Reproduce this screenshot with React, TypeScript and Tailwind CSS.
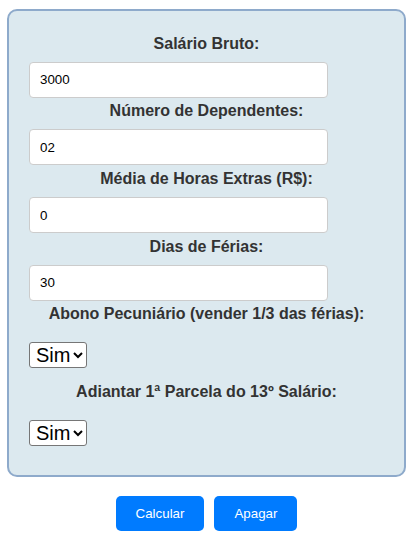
import { useState } from "react";

const labelCls =
  "block self-stretch text-center text-[16px] font-bold leading-[18px] text-[#333] mt-[4.7px] mb-[9px]";
const inputCls =
  "block h-[36px] w-[299px] rounded-[4px] border border-[#ccc] bg-white px-[10px] text-[13.33px] text-black outline-none";
const selectCls =
  "mt-[10px] mb-[10px] block h-[26px] w-[58px] rounded-[3px] border border-[#767676] bg-white pl-[2px] text-[20px] text-black";

function Field({ label, value }: { label: string; value: string }) {
  const [v, setV] = useState(value);
  return (
    <>
      <label className={labelCls}>{label}</label>
      <input className={inputCls} value={v} onChange={(e) => setV(e.target.value)} />
    </>
  );
}

function YesNo({ label }: { label: string }) {
  return (
    <>
      <label className={labelCls}>{label}</label>
      <select className={selectCls} defaultValue="sim">
        <option value="sim">Sim</option>
        <option value="nao">Não</option>
      </select>
    </>
  );
}

export default function App() {
  return (
    <div className="min-h-[538px] bg-white pt-[9px] font-['Liberation_Sans',Arial,sans-serif]">
      <form
        className="mx-auto flex w-[399px] flex-col items-start rounded-[10px] border-2 border-[#8eaacb] bg-[#dce9ef] px-[20px] pt-[19px] pb-[19px]"
        onSubmit={(e) => e.preventDefault()}
      >
        <Field label="Salário Bruto:" value="3000" />
        <Field label="Número de Dependentes:" value="02" />
        <Field label="Média de Horas Extras (R$):" value="0" />
        <Field label="Dias de Férias:" value="30" />
        <YesNo label="Abono Pecuniário (vender 1/3 das férias):" />
        <YesNo label="Adiantar 1ª Parcela do 13º Salário:" />
      </form>
      <div className="mt-[19px] flex justify-center gap-[10px]">
        <button className="rounded-[5px] bg-[#007bff] px-[20px] py-[10px] text-[13.33px] leading-[15px] text-white">
          Calcular
        </button>
        <button className="rounded-[5px] bg-[#007bff] px-[20px] py-[10px] text-[13.33px] leading-[15px] text-white">
          Apagar
        </button>
      </div>
    </div>
  );
}
